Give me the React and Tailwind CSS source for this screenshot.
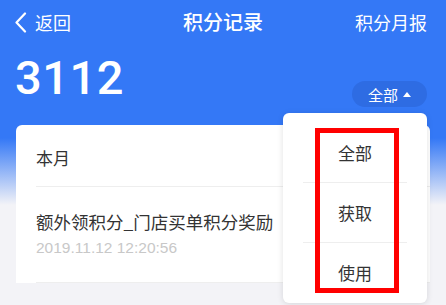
const cjk = "font-['Noto_Sans_CJK_SC','Noto_Sans',sans-serif]";

const BackIcon = () => (
    <svg width="13" height="21" viewBox="0 0 13 21" fill="none">
        <path d="M11 1.5 L2.5 10.5 L11 19.5" stroke="white" strokeWidth="2.2" strokeLinecap="round" strokeLinejoin="round" />
    </svg>
);

const menuItems = ["全部", "获取", "使用"];

export default function App() {
    return (
        <div className={`relative h-[305px] w-[446px] overflow-hidden bg-[linear-gradient(to_bottom,#3478f6_138px,#f3f3f7_205px)] ${cjk}`}>
            <header className="grid h-[44px] grid-cols-[1fr_auto_1fr] items-center px-[14px] text-white">
                <div className="flex items-center gap-[8px]">
                    <BackIcon />
                    <span className="text-[18px] leading-none">返回</span>
                </div>
                <h1 className="text-[20px] font-medium leading-none">积分记录</h1>
                <span className="justify-self-end pr-[5px] text-[18px] leading-none">积分月报</span>
            </header>

            <div className="mt-[10px] flex items-end justify-between pl-[15px] pr-[19px]">
                <span className="font-['Roboto',sans-serif] text-[47px] font-medium leading-none tracking-[0.5px] text-white">
                    3112
                </span>
                <button
                    type="button"
                    className="mb-[-6px] flex h-[26px] w-[75px] items-center justify-center gap-[5px] rounded-full bg-[#2e6ce3] text-[15px] text-white"
                >
                    <span className="leading-none">全部</span>
                    <span className="h-0 w-0 border-x-[4.5px] border-b-[5px] border-x-transparent border-b-white" />
                </button>
            </div>

            <section className="mx-[16px] mt-[24px] rounded-t-[6px] bg-white">
                <div className="flex h-[61px] items-center pl-[20px] pt-[4px] text-[17px] text-[#333]">
                    本月
                </div>
                <div className="ml-[20px] h-px bg-[#eeeeee]" />
                <div className="flex h-[95px] flex-col justify-center pl-[20px] pb-[2px]">
                    <p className="text-[17.5px] leading-[24px] text-[#333]">额外领积分_门店买单积分奖励</p>
                    <p className="mt-[5px] font-['Liberation_Sans',sans-serif] text-[15.5px] leading-[18px] text-[#c8c8c8]">
                        2019.11.12 12:20:56
                    </p>
                </div>
                <div className="ml-[20px] h-px bg-[#eeeeee]" />
            </section>

            <div className="absolute left-[283px] top-[113px] h-[190px] w-[144px] rounded-[6px] bg-white px-[20px] pt-[10px] shadow-[0_1px_6px_rgba(0,0,0,0.12)]">
                {menuItems.map((item, i) => (
                    <div
                        key={item}
                        className={`flex h-[60px] items-center justify-center text-[17px] text-[#333] ${i < 2 ? "border-b border-[#eeeeee]" : ""}`}
                    >
                        {item}
                    </div>
                ))}
            </div>

            <div className="pointer-events-none absolute left-[315px] top-[128px] h-[165px] w-[84px] border-[5px] border-[#ff0000]" />
        </div>
    );
}
